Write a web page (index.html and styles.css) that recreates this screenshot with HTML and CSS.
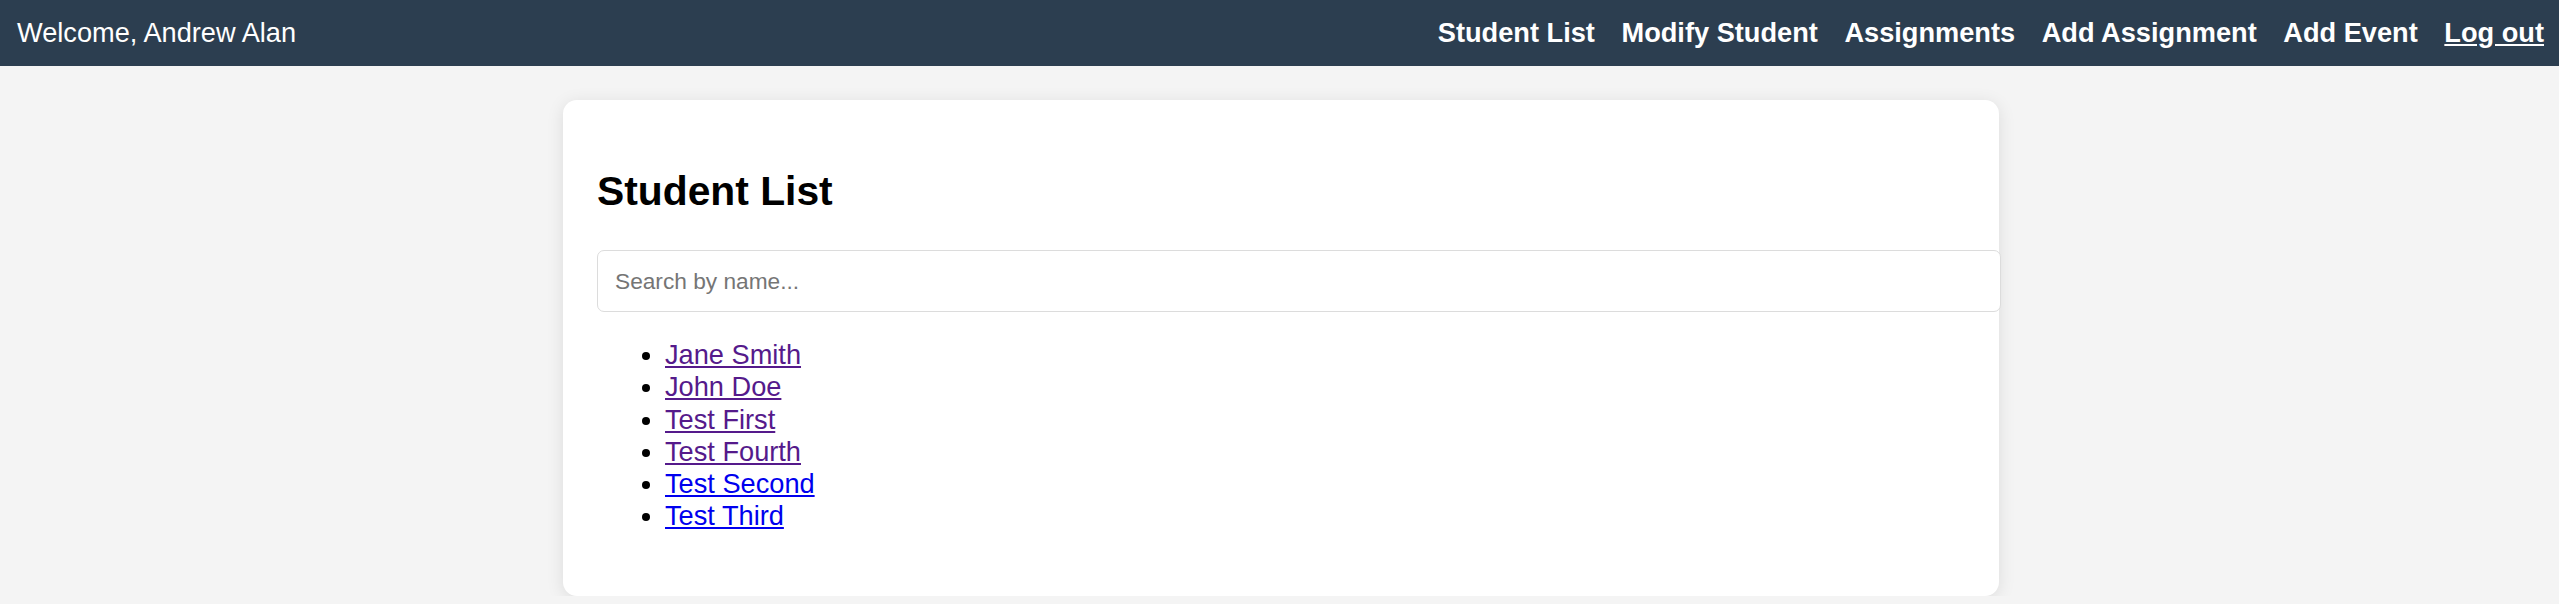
FILE: index.html
```html
<!DOCTYPE html>
<html lang="en">
<head>
<meta charset="utf-8">
<title>Student List</title>
<link rel="stylesheet" href="styles.css">
</head>
<body>
<nav class="navbar">
  <div class="welcome">Welcome, Andrew Alan</div>
  <div class="nav-links">
    <a href="#">Student List</a>
    <a href="#">Modify Student</a>
    <a href="#">Assignments</a>
    <a href="#">Add Assignment</a>
    <a href="#">Add Event</a>
    <a href="#" class="logout">Log out</a>
  </div>
</nav>
<main class="container">
  <h2 class="title">Student List</h2>
  <input class="search" type="text" placeholder="Search by name...">
  <ul class="students">
    <li><a class="visited" href="#">Jane Smith</a></li>
    <li><a class="visited" href="#">John Doe</a></li>
    <li><a class="visited" href="#">Test First</a></li>
    <li><a class="visited" href="#">Test Fourth</a></li>
    <li><a href="#">Test Second</a></li>
    <li><a href="#">Test Third</a></li>
  </ul>
</main>
</body>
</html>
```

FILE: styles.css
```css
html, body {
  margin: 0;
  padding: 0;
}
body {
  background: #f4f4f4;
  font-family: "Liberation Sans", Arial, sans-serif;
  font-size: 27.2px;
  color: #000;
}
.navbar {
  height: 66px;
  background: #2c3e50;
  color: #fff;
  display: flex;
  align-items: center;
  justify-content: space-between;
  padding: 0 15px 0 17px;
}
.welcome {
  font-size: 27.2px;
}
.nav-links {
  display: flex;
  gap: 26.6px;
}
.nav-links a {
  color: #fff;
  font-weight: bold;
  text-decoration: none;
  font-size: 27.2px;
}
.nav-links a.logout {
  text-decoration: underline;
}
.container {
  width: 1368px;
  margin: 34px 0 0 calc(50% - 716.5px);
  background: #fff;
  padding: 34px 34px 36px;
  border-radius: 14px;
  box-shadow: 0 3px 17px rgba(0, 0, 0, 0.1);
}
.title {
  font-size: 40.8px;
  font-weight: bold;
  margin: 34px 0 35px;
}
.search {
  display: block;
  width: 100%;
  box-sizing: content-box;
  padding: 17px;
  height: 26px;
  font-family: "Liberation Sans", Arial, sans-serif;
  font-size: 22.7px;
  border: 1.7px solid #dcdcdc;
  border-radius: 7px;
  outline: none;
  margin: 0;
}
.search::placeholder {
  color: #757575;
}
.students {
  margin: 27.2px 0;
  padding-left: 68px;
}
.students li {
  line-height: 32.2px;
}
.students a {
  color: #0000ee;
  text-decoration: underline;
}
.students a.visited {
  color: #551a8b;
}
```
